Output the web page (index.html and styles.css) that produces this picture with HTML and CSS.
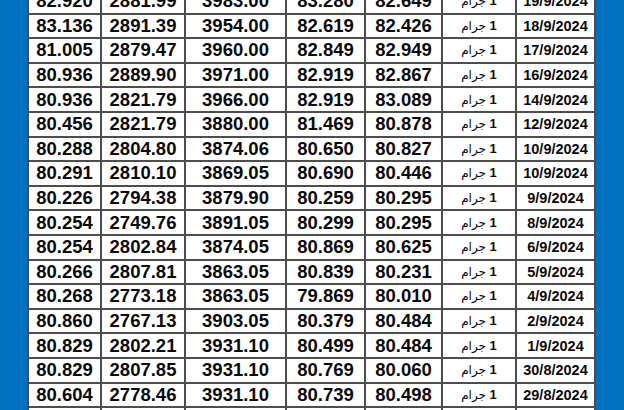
FILE: index.html
```html
<!DOCTYPE html>
<html lang="ar">
<head>
<meta charset="utf-8">
<link rel="stylesheet" href="styles.css">
</head>
<body>
<div class="sheet">
<table class="prices" dir="ltr">
<colgroup>
<col class="c1"><col class="c2"><col class="c3"><col class="c4"><col class="c5"><col class="c6"><col class="c7">
</colgroup>
<tbody>
<tr><td>82.920</td><td>2881.99</td><td>3983.00</td><td>83.280</td><td>82.649</td><td class="unit" dir="rtl"><b>1</b> <span>جرام</span></td><td class="date">19/9/2024</td></tr>
<tr><td>83.136</td><td>2891.39</td><td>3954.00</td><td>82.619</td><td>82.426</td><td class="unit" dir="rtl"><b>1</b> <span>جرام</span></td><td class="date">18/9/2024</td></tr>
<tr><td>81.005</td><td>2879.47</td><td>3960.00</td><td>82.849</td><td>82.949</td><td class="unit" dir="rtl"><b>1</b> <span>جرام</span></td><td class="date">17/9/2024</td></tr>
<tr><td>80.936</td><td>2889.90</td><td>3971.00</td><td>82.919</td><td>82.867</td><td class="unit" dir="rtl"><b>1</b> <span>جرام</span></td><td class="date">16/9/2024</td></tr>
<tr><td>80.936</td><td>2821.79</td><td>3966.00</td><td>82.919</td><td>83.089</td><td class="unit" dir="rtl"><b>1</b> <span>جرام</span></td><td class="date">14/9/2024</td></tr>
<tr><td>80.456</td><td>2821.79</td><td>3880.00</td><td>81.469</td><td>80.878</td><td class="unit" dir="rtl"><b>1</b> <span>جرام</span></td><td class="date">12/9/2024</td></tr>
<tr><td>80.288</td><td>2804.80</td><td>3874.06</td><td>80.650</td><td>80.827</td><td class="unit" dir="rtl"><b>1</b> <span>جرام</span></td><td class="date">10/9/2024</td></tr>
<tr><td>80.291</td><td>2810.10</td><td>3869.05</td><td>80.690</td><td>80.446</td><td class="unit" dir="rtl"><b>1</b> <span>جرام</span></td><td class="date">10/9/2024</td></tr>
<tr><td>80.226</td><td>2794.38</td><td>3879.90</td><td>80.259</td><td>80.295</td><td class="unit" dir="rtl"><b>1</b> <span>جرام</span></td><td class="date">9/9/2024</td></tr>
<tr><td>80.254</td><td>2749.76</td><td>3891.05</td><td>80.299</td><td>80.295</td><td class="unit" dir="rtl"><b>1</b> <span>جرام</span></td><td class="date">8/9/2024</td></tr>
<tr><td>80.254</td><td>2802.84</td><td>3874.05</td><td>80.869</td><td>80.625</td><td class="unit" dir="rtl"><b>1</b> <span>جرام</span></td><td class="date">6/9/2024</td></tr>
<tr><td>80.266</td><td>2807.81</td><td>3863.05</td><td>80.839</td><td>80.231</td><td class="unit" dir="rtl"><b>1</b> <span>جرام</span></td><td class="date">5/9/2024</td></tr>
<tr><td>80.268</td><td>2773.18</td><td>3863.05</td><td>79.869</td><td>80.010</td><td class="unit" dir="rtl"><b>1</b> <span>جرام</span></td><td class="date">4/9/2024</td></tr>
<tr><td>80.860</td><td>2767.13</td><td>3903.05</td><td>80.379</td><td>80.484</td><td class="unit" dir="rtl"><b>1</b> <span>جرام</span></td><td class="date">2/9/2024</td></tr>
<tr><td>80.829</td><td>2802.21</td><td>3931.10</td><td>80.499</td><td>80.484</td><td class="unit" dir="rtl"><b>1</b> <span>جرام</span></td><td class="date">1/9/2024</td></tr>
<tr><td>80.829</td><td>2807.85</td><td>3931.10</td><td>80.769</td><td>80.060</td><td class="unit" dir="rtl"><b>1</b> <span>جرام</span></td><td class="date">30/8/2024</td></tr>
<tr><td>80.604</td><td>2778.46</td><td>3931.10</td><td>80.739</td><td>80.498</td><td class="unit" dir="rtl"><b>1</b> <span>جرام</span></td><td class="date">29/8/2024</td></tr>
<tr><td>80.604</td><td>2778.46</td><td>3931.10</td><td>80.739</td><td>80.498</td><td class="unit" dir="rtl"><b>1</b> <span>جرام</span></td><td class="date">28/8/2024</td></tr>
</tbody>
</table>
</div>
</body>
</html>
```
FILE: styles.css
```css
html, body {
  margin: 0;
  padding: 0;
}
body {
  background: #0070c0;
  width: 624px;
  height: 410px;
  overflow: hidden;
  font-family: "Liberation Sans", "DejaVu Sans", Arial, sans-serif;
}
.sheet {
  padding-left: 27px;
  margin-top: -12px;
}
.prices {
  border-collapse: collapse;
  table-layout: fixed;
  width: 569px;
  background: #fff;
  color: #0a0a0a;
}
.c1 { width: 73px; }
.c2 { width: 84px; }
.c3 { width: 101px; }
.c4 { width: 79px; }
.c5 { width: 77px; }
.c6 { width: 74px; }
.c7 { width: 79px; }
.prices td {
  border: 2px solid #4d4d4d;
  height: 22.6px;
  padding: 0;
  text-align: center;
  vertical-align: middle;
  font-weight: bold;
  font-size: 18.5px;
  line-height: 20px;
  white-space: nowrap;
}
.prices td.date {
  font-size: 14.5px;
}
.prices td.unit {
  font-size: 13px;
}
.prices td.unit span {
  font-family: "DejaVu Sans", sans-serif;
  font-weight: normal;
  font-size: 12px;
}
```
